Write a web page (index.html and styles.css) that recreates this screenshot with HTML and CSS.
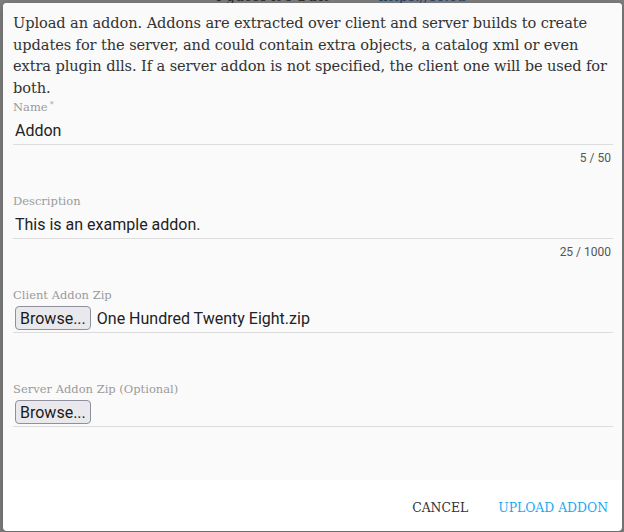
FILE: index.html
```html
<!DOCTYPE html>
<html lang="en">
<head>
<meta charset="utf-8">
<title>Upload Addon</title>
<link rel="stylesheet" href="styles.css">
</head>
<body>
<div class="page">
  <div class="page-row"><span class="page-text">I guess it's a bit</span><span class="page-link">https://so.cu</span></div>
</div>
<div class="dialog">
  <div class="content">
    <p class="intro">Upload an addon. Addons are extracted over client and server builds to create updates for the server, and could contain extra objects, a catalog xml or even extra plugin dlls. If a server addon is not specified, the client one will be used for both.</p>

    <div class="field">
      <label class="label">Name<sup>*</sup></label>
      <div class="input-row"><span class="value">Addon</span></div>
      <div class="counter">5 / 50</div>
    </div>

    <div class="field">
      <label class="label">Description</label>
      <div class="input-row"><span class="value">This is an example addon.</span></div>
      <div class="counter">25 / 1000</div>
    </div>

    <div class="field field-gap">
      <label class="label">Client Addon Zip</label>
      <div class="input-row"><button class="browse">Browse...</button><span class="file-name">One Hundred Twenty Eight.zip</span></div>
    </div>

    <div class="field field-last">
      <label class="label">Server Addon Zip (Optional)</label>
      <div class="input-row"><button class="browse">Browse...</button></div>
    </div>
  </div>
  <div class="actions">
    <button class="action">Cancel</button>
    <button class="action primary">Upload Addon</button>
  </div>
</div>
</body>
</html>
```
FILE: styles.css
```css
html, body {
  margin: 0;
  padding: 0;
}
body {
  width: 624px;
  height: 532px;
  background: #7e7e7e;
  position: relative;
  overflow: hidden;
}
.page {
  position: absolute;
  left: 0;
  top: -12px;
  width: 624px;
}
.page-row {
  display: flex;
  gap: 50px;
  padding-left: 216px;
  font-family: "DejaVu Serif", serif;
  font-size: 14px;
  line-height: 16px;
}
.page-text { color: #2a2a2a; }
.page-link { color: #1b3f6e; }

.dialog {
  position: absolute;
  left: 3px;
  top: 3px;
  width: 619px;
  height: 528px;
  background: #ffffff;
  border-radius: 4px;
  overflow: hidden;
  display: flex;
  flex-direction: column;
  box-shadow: 0 2px 8px rgba(0,0,0,0.25);
}
.content {
  background: #fafafa;
  height: 477px;
  box-sizing: border-box;
  padding: 9px 9px 0 10px;
}
.intro {
  margin: 0;
  font-family: "DejaVu Serif", serif;
  font-size: 14.6px;
  line-height: 21.5px;
  color: #333333;
  letter-spacing: -0.1px;
}
.field {
  padding-bottom: 29px;
}
.field:first-of-type { margin-top: 2px; }
.field-gap { padding-bottom: 49px; }
.field-last { padding-bottom: 0; }
.label {
  display: block;
  font-family: "DejaVu Serif", serif;
  font-size: 11.5px;
  line-height: 14px;
  color: #9a9a9a;
}
.label sup {
  font-size: 8px;
  vertical-align: top;
  line-height: 10px;
  margin-left: 2px;
}
.input-row {
  height: 28px;
  padding-top: 2px;
  border-bottom: 1px solid #dcdcdc;
  display: flex;
  align-items: center;
  padding-left: 2px;
  font-family: Roboto, sans-serif;
  font-size: 16px;
  color: #222222;
}
.counter {
  margin-top: 6px;
  text-align: right;
  padding-right: 2px;
  font-family: Roboto, sans-serif;
  font-size: 12px;
  line-height: 14px;
  color: #555555;
}
.browse {
  height: 24px;
  box-sizing: border-box;
  padding: 0 4px;
  background: #e9e9ed;
  border: 1px solid #8f8f9d;
  border-radius: 4px;
  font-family: Roboto, sans-serif;
  font-size: 16px;
  color: #1a1a1a;
  margin: 0;
}
.file-name {
  margin-left: 6px;
}
.actions {
  flex: 1;
  display: flex;
  justify-content: flex-end;
  align-items: center;
  gap: 14px;
  padding-right: 6px;
  padding-top: 4px;
}
.action {
  height: 36px;
  padding: 0 8px;
  background: transparent;
  border: 0;
  font-family: "DejaVu Serif", serif;
  font-size: 12.4px;
  text-transform: uppercase;
  color: #333333;
  cursor: pointer;
}
.action.primary {
  color: #1aa9ef;
}
```
